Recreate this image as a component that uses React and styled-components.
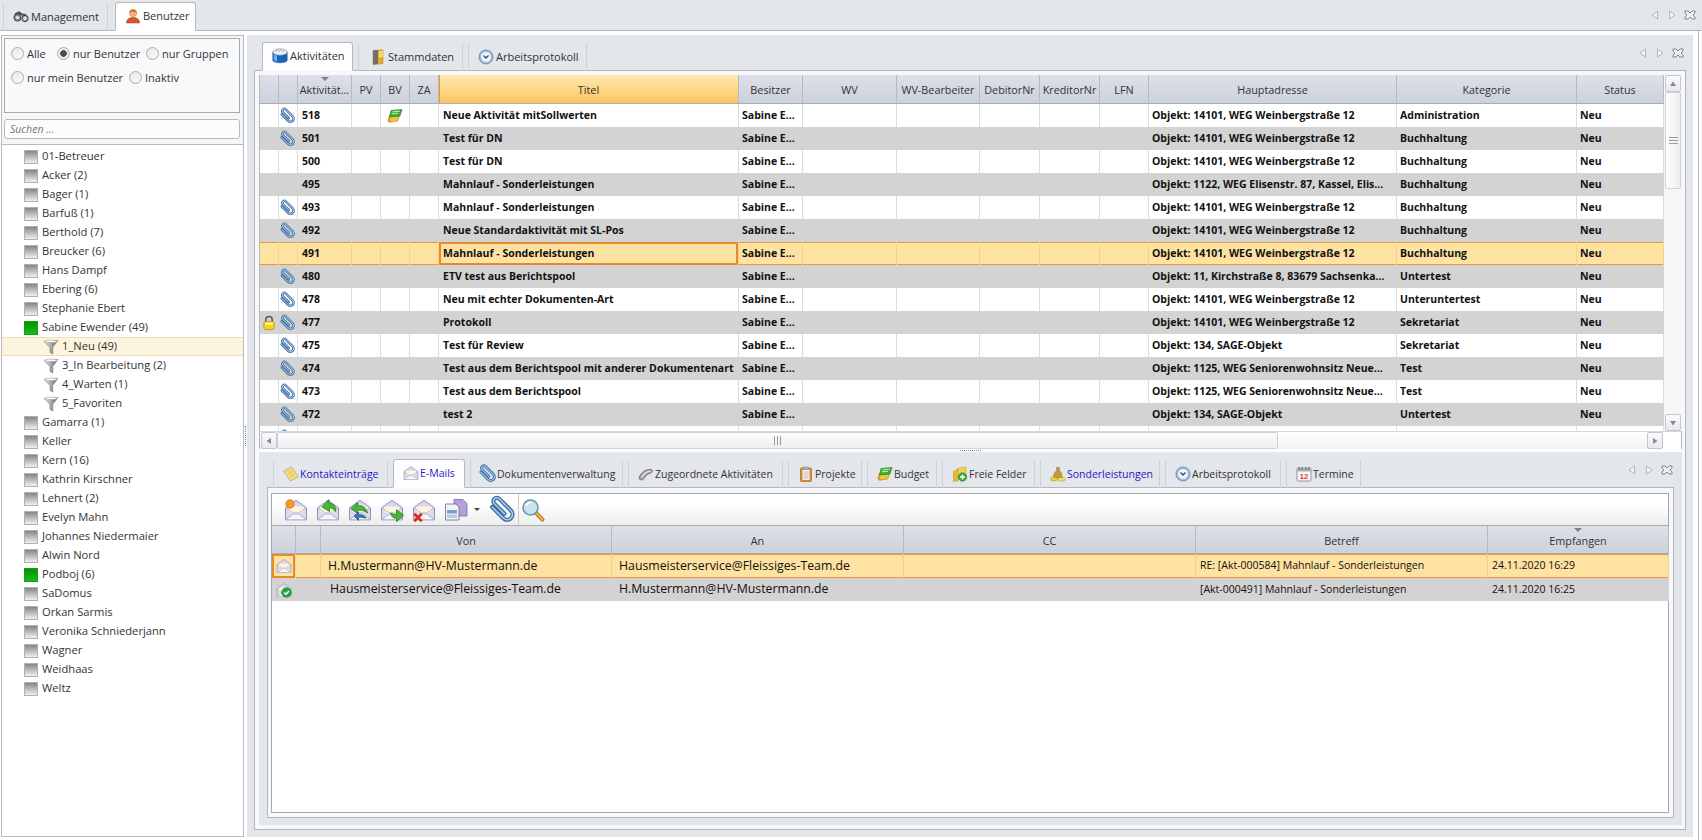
import React from "react";
import styled, { createGlobalStyle } from "styled-components";

const GlobalStyle = createGlobalStyle`
    html, body {
        margin: 0;
        padding: 0;
        background: #fff;
    }
    * {
        box-sizing: border-box;
    }
    body {
        font-family: "Open Sans", "Liberation Sans", sans-serif;
        font-size: 11px;
        color: #222;
    }
`;

const Page = styled.div`
    width: 1702px;
    height: 840px;
    overflow: hidden;
    display: flex;
    flex-direction: column;
    background: #fff;
`;

const TopStrip = styled.div`
    height: 31px;
    flex: none;
    display: flex;
    align-items: flex-end;
    padding-left: 3px;
    gap: 7px;
    background: #e3e6ea;
    border-bottom: 1px solid #b4b6b9;
`;

const Tab = styled.div`
    position: relative;
    width: ${p => p.$w}px;
    height: ${p => (p.$active ? 29 : 28)}px;
    margin-bottom: -1px;
    flex: none;
    display: flex;
    align-items: center;
    gap: ${p => p.$gap ?? 2}px;
    padding: 0 0 2px ${p => p.$pad ?? 9}px;
    white-space: nowrap;
    font-size: ${p => p.$size ?? 11}px;
    color: ${p => (p.$link ? "#1c1cc4" : "#333")};
    z-index: 1;
    background: ${p => (p.$active ? "linear-gradient(#fdfdfe, #fff)" : "transparent")};
    border: 1px solid ${p => (p.$active ? "#b7babd" : "#cdd0d5")};
    border-bottom: ${p => (p.$active ? "1px solid #fff" : "none")};
    border-radius: ${p => (p.$active ? "3px 3px 0 0" : "0")};
    border-top-color: ${p => (p.$active ? "#b7babd" : "transparent")};
`;

const Controls = styled.div`
    margin-left: auto;
    align-self: center;
    display: flex;
    align-items: center;
    gap: 7px;
    padding-right: ${p => p.$right}px;
`;

const Main = styled.div`
    flex: 1;
    min-height: 0;
    width: 1699px;
    display: flex;
    padding: 4px 5px 3px 1px;
    border-right: 1px solid #b4b6b9;
`;

const LeftPane = styled.div`
    width: 243px;
    flex: none;
    display: flex;
    flex-direction: column;
`;

const FilterArea = styled.div`
    height: 109px;
    flex: none;
    padding: 2px 3px 0 2px;
    background: #f5f6f8;
    border: 1px solid #b8babd;
    border-bottom: none;
`;

const RadioBox = styled.div`
    height: 75px;
    padding: 5px 0 0 6px;
    display: flex;
    flex-direction: column;
    gap: 6px;
    background: #f8f9fa;
    border: 1px solid #a8aaad;
`;

const RadioRow = styled.div`
    height: 18px;
    display: flex;
    align-items: center;
`;

const Radio = styled.label`
    display: flex;
    align-items: center;
    gap: 3px;
    width: ${p => p.$w}px;
    flex: none;
    font-size: 11px;
    color: #333;
`;

const RadioMark = styled.span`
    width: 13px;
    height: 13px;
    flex: none;
    border-radius: 50%;
    border: 1px solid #a9abae;
    background: ${p => (p.$on
        ? "radial-gradient(circle, #4a4a4a 0 3px, #e9ebee 3.6px)"
        : "linear-gradient(135deg, #e4e6e9, #fbfbfc)")};
`;

const SearchBox = styled.div`
    height: 20px;
    margin-top: 6px;
    padding-left: 5px;
    display: flex;
    align-items: center;
    font-style: italic;
    font-size: 10.5px;
    color: #777;
    background: #fcfcfd;
    border: 1px solid #b7b9bc;
    border-radius: 3px;
`;

const Tree = styled.div`
    flex: 1;
    padding-top: 2px;
    background: #fff;
    border: 1px solid #b8babd;
`;

const TreeRow = styled.div`
    height: 19px;
    display: flex;
    align-items: center;
    gap: ${p => (p.$sub ? 3 : 4)}px;
    padding-left: ${p => (p.$sub ? 41 : 22)}px;
    font-size: 11.2px;
    color: #333;
    background: ${p => (p.$selected ? "#fdf4de" : "transparent")};
    box-shadow: ${p => (p.$selected ? "inset 0 1px #ecdcbd, inset 0 -1px #ecdcbd" : "none")};
`;

const TreeLabel = styled.span`
    margin-top: -2px;
`;

const StateBox = styled.span`
    width: 14px;
    height: 14px;
    flex: none;
    border: 1px solid ${p => (p.$green ? "#10a010" : "#b0b0b0")};
    background: ${p => (p.$green
        ? "linear-gradient(#0a8f0a, #12c012)"
        : "linear-gradient(#858585, #f0f0f0)")};
`;

const VSplit = styled.div`
    width: 3px;
    flex: none;
    display: flex;
    align-items: center;
    justify-content: center;
`;

const VGrip = styled.div`
    width: 1px;
    height: 20px;
    border-left: 1px dotted #5f9a8a;
`;

const RightPane = styled.div`
    flex: 1;
    min-width: 0;
    display: flex;
    flex-direction: column;
    padding: 0 7px 7px;
    background: #e3e6ea;
`;

const TabStrip = styled.div`
    height: 35px;
    flex: none;
    display: flex;
    align-items: flex-end;
    gap: 5px;
    padding-left: ${p => p.$left}px;
`;

const TabBox = styled.div`
    flex: 1;
    min-height: 0;
    display: flex;
    flex-direction: column;
    padding: ${p => p.$pad};
    background: #f7f8f9;
    border: 1px solid #b4b6b9;
`;

const GridFrame = styled.div`
    height: 374px;
    flex: none;
    display: flex;
    flex-direction: column;
    background: #fff;
    border: 1px solid #b4b6b9;
    border-top: none;
`;

const GridTop = styled.div`
    height: 356px;
    flex: none;
    display: flex;
`;

const GridBody = styled.div`
    width: 1404px;
    flex: none;
    overflow: hidden;
`;

const Line = styled.div`
    display: grid;
    grid-template-columns: ${p => p.$cols};
    height: ${p => p.$h}px;
`;

const HeadCell = styled.div`
    position: relative;
    display: flex;
    align-items: center;
    justify-content: center;
    padding-top: 1px;
    font-size: 10.8px;
    color: #333;
    white-space: nowrap;
    overflow: hidden;
    background: ${p => (p.$hot
        ? "linear-gradient(#feeab0, #fbc661)"
        : "linear-gradient(#dde0e9, #cdd1dc)")};
    border-right: 1px solid #b6b9c1;
    border-bottom: 1px solid #a9acb2;
    box-shadow: ${p => (p.$hot ? "inset 1px 0 #e59a3a" : "none")};
`;

const SortMark = styled.span`
    position: absolute;
    top: 2px;
    left: 50%;
    margin-left: -4px;
    width: 0;
    height: 0;
    border-left: 4px solid transparent;
    border-right: 4px solid transparent;
    border-top: 4px solid #7d808a;
`;

const Cell = styled.div`
    display: flex;
    align-items: center;
    justify-content: ${p => (p.$icon ? "center" : "flex-start")};
    padding-left: ${p => (p.$icon ? 0 : p.$pad ?? 3)}px;
    padding-bottom: ${p => (p.$icon ? 0 : 2)}px;
    white-space: nowrap;
    overflow: hidden;
    font-size: ${p => p.$size ?? 10.5}px;
    font-weight: ${p => (p.$bold ? 700 : 400)};
    color: #111;
    background: ${p => (p.$selected ? "#fee2a1" : p.$odd ? "#d3d3d3" : "#fff")};
    border-right: 1px solid ${p => (p.$selected ? "#f2d491" : p.$odd ? "#d3d3d3" : "#dcdcdc")};
    box-shadow: ${p => {
        if (p.$focus) return "inset 0 0 0 2px #e58a2e";
        if (p.$selected) return "inset 0 1px #e8973d, inset 0 -1px #e8973d";
        return "none";
    }};
`;

const VScroll = styled.div`
    flex: 1;
    display: flex;
    flex-direction: column;
    padding: 0 1px;
    background: #f6f6f7;
`;

const HScroll = styled.div`
    flex: 1;
    display: flex;
    padding-left: 1px;
    background: linear-gradient(#fff, #f1f2f4);
    border-top: 1px solid #d4d6d9;
`;

const ScrollBtn = styled.div`
    width: 16px;
    height: 17px;
    flex: none;
    display: flex;
    align-items: center;
    justify-content: center;
    background: linear-gradient(#fafbfc, #e6e8eb);
    border: 1px solid #c3c6ca;
    border-radius: 2px;
`;

const VThumb = styled.div`
    height: 97px;
    flex: none;
    display: flex;
    align-items: center;
    justify-content: center;
    background: linear-gradient(90deg, #fdfdfe, #eceef1);
    border: 1px solid #cfd1d5;
    border-radius: 2px;
`;

const HThumb = styled.div`
    width: 1001px;
    flex: none;
    display: flex;
    align-items: center;
    justify-content: center;
    background: linear-gradient(#fdfdfe, #eceef1);
    border: 1px solid #cfd1d5;
    border-radius: 2px;
`;

const Spacer = styled.div`
    flex: 1;
`;

const ScrollCorner = styled.div`
    width: 18px;
    flex: none;
    background: #fff;
`;

const GripH = styled.div`
    width: 9px;
    height: 7px;
    border-top: 1px solid #9a9a9a;
    border-bottom: 1px solid #9a9a9a;
    background: linear-gradient(#9a9a9a, #9a9a9a) center / 100% 1px no-repeat;
`;

const GripV = styled.div`
    width: 7px;
    height: 9px;
    border-left: 1px solid #9a9a9a;
    border-right: 1px solid #9a9a9a;
    background: linear-gradient(#9a9a9a, #9a9a9a) center / 1px 100% no-repeat;
`;

const HSplit = styled.div`
    height: 3px;
    flex: none;
    display: flex;
    justify-content: center;
    background: #fff;
`;

const HGrip = styled.div`
    width: 21px;
    height: 1px;
    margin-top: 1px;
    border-top: 1px dotted #5f9a8a;
`;

const LowerPanel = styled.div`
    flex: 1;
    min-height: 0;
    display: flex;
    flex-direction: column;
    padding: 0 8px 7px;
    background: #e3e6ea;
`;

const MailBox = styled.div`
    flex: 1;
    min-height: 0;
    display: flex;
    flex-direction: column;
    background: #fff;
    border: 1px solid #a6a8ab;
`;

const Toolbar = styled.div`
    height: 32px;
    flex: none;
    display: flex;
    align-items: center;
    padding-left: 12px;
    background: linear-gradient(#fff 30%, #eceded);
    border-bottom: 1px solid #a9acb2;
`;

const ToolGroup = styled.div`
    display: flex;
    align-items: center;
    height: 100%;
    gap: 8px;
    padding-right: ${p => p.$end ?? 0}px;
    padding-left: ${p => p.$start ?? 0}px;
    border-right: ${p => (p.$line ? "1px solid #c9cbce" : "none")};
`;

const Caret = styled.span`
    width: 0;
    height: 0;
    margin-left: -2px;
    margin-right: 3px;
    border-left: 3px solid transparent;
    border-right: 3px solid transparent;
    border-top: 3px solid #444;
`;

/* icons */

const Svg = ({ size = 16, box = 16, children }) => (
    <svg width={size} height={size} viewBox={`0 0 ${box} ${box}`} style={{ flex: "none", display: "block", overflow: "visible" }}>
        {children}
    </svg>
);

const CLIP_PATH = "M4.300 1.500V12a3.600 3.600 0 0 0 7.200 0V1a2.300 2.300 0 0 0-4.600 0V10.500";

const Clip = ({ size = 14 }) => (
    <Svg size={size}>
        <g transform="rotate(-45 8 8)" fill="none" strokeLinecap="round">
            <path d={CLIP_PATH} stroke="#3a6c9f" strokeWidth="2.800" />
            <path d={CLIP_PATH} stroke="#a9c8e6" strokeWidth="1.100" />
        </g>
    </Svg>
);

const Funnel = () => (
    <Svg>
        <defs>
            <linearGradient id="fnl" x1="0" x2="1">
                <stop offset="0" stopColor="#f2f2f2" />
                <stop offset="1" stopColor="#5f5f5f" />
            </linearGradient>
        </defs>
        <path d="M1 2.500 15 1.500 9.800 8.200V15L7 13.500V8.400Z" fill="url(#fnl)" stroke="#777" strokeWidth=".6" />
        <ellipse cx="8" cy="2.300" rx="6.600" ry="1.200" fill="#fff" stroke="#8c8c8c" strokeWidth=".5" />
    </Svg>
);

const Lock = () => (
    <Svg>
        <path d="M4.800 7V4.600a3.200 3.200 0 0 1 6.400 0V7" fill="none" stroke="#555" strokeWidth="1.500" />
        <rect x="2.800" y="6.600" width="10.400" height="8" rx="2" fill="#f6d417" stroke="#b78d10" strokeWidth=".8" />
        <rect x="4" y="7.600" width="8" height="2.400" rx="1" fill="#fff18a" />
    </Svg>
);

const Budget = () => (
    <Svg>
        <path d="M2.500 7 6 8 3.500 14.500 .8 13Z" fill="#e7b632" stroke="#a67c16" strokeWidth=".5" />
        <path d="M3 8.500 12.500 8 10.500 13 2 14Z" fill="#f0c43c" stroke="#a67c16" strokeWidth=".6" />
        <path d="M4 2.500 15 1.500 13 8 2.500 8.800Z" fill="#3fae3a" stroke="#23781f" strokeWidth=".6" />
        <path d="M5.500 3.800 13 3.200M4.800 5.800 11 5.300" stroke="#c3efb0" strokeWidth="1" />
    </Svg>
);

const Binoculars = () => (
    <Svg>
        <circle cx="4.500" cy="8.500" r="3.600" fill="#8a8f96" stroke="#3f4348" />
        <circle cx="12" cy="9.500" r="3.200" fill="#a3a8ae" stroke="#3f4348" />
        <path d="M2 5.500 6 3.500 9 5.500 13 6" fill="none" stroke="#4a4e54" strokeWidth="2" />
        <circle cx="4.500" cy="8.500" r="1.600" fill="#e8ebee" />
        <circle cx="12" cy="9.500" r="1.400" fill="#e8ebee" />
    </Svg>
);

const UserIcon = () => (
    <Svg>
        <path d="M1.500 15c0-4 2.600-5.600 6.500-5.600s6.500 1.600 6.500 5.600Z" fill="#d9552a" stroke="#a53b17" strokeWidth=".5" />
        <circle cx="8" cy="5" r="3.700" fill="#f3b27f" stroke="#bd7a44" strokeWidth=".5" />
        <path d="M4.400 4.500C5 1.500 11 1.200 11.600 4.500 9.500 3.300 6.500 3.300 4.400 4.500Z" fill="#9c5a22" />
    </Svg>
);

const Drum = () => (
    <Svg>
        <path d="M.8 4V12.500C2 15.500 14 15.500 15.200 12.500V4Z" fill="#1666b8" stroke="#124a86" strokeWidth=".5" />
        <path d="M1.800 6.500V12c1 1.200 2.500 1.500 3.200 1.600V7.500Z" fill="#6cb0ec" />
        <ellipse cx="8" cy="4" rx="7.200" ry="3.200" fill="#eaeff4" stroke="#7d8a98" strokeWidth=".6" />
        <path d="M3.500 3 5.500 1.800 7 3.500 9 1.800 10.500 3.500 12.500 2.400" fill="none" stroke="#97a3b0" strokeWidth=".8" />
    </Svg>
);

const Binder = () => (
    <Svg>
        <path d="M3 1.500 13 .8V14.500L3 15.500Z" fill="#e5a92e" stroke="#a67c16" strokeWidth=".5" />
        <path d="M3 1.500 8 1V15L3 15.500Z" fill="#70706b" />
        <path d="M9 2 13 1.800V8L9 8.400Z" fill="#f6d676" />
    </Svg>
);

const ClockIcon = () => (
    <Svg>
        <circle cx="8" cy="8" r="7" fill="#9fc0e2" stroke="#5d7fa6" strokeWidth=".8" />
        <circle cx="8" cy="8" r="4.800" fill="#f3f7fb" />
        <path d="M5.500 6.500 8 9 10.500 6.500" fill="none" stroke="#27466e" strokeWidth="1.300" />
    </Svg>
);

const Note = () => (
    <Svg>
        <path d="M.8 5 8.500 1 15.500 10.500 7.500 15Z" fill="#f9e07f" stroke="#a8a16a" strokeWidth=".7" />
        <path d="M4 5.800 8.600 3.500M5.200 7.600 9.800 5.300M6.400 9.400 11 7.100M7.600 11.200 12.200 8.900" stroke="#bfa94a" strokeWidth=".6" />
    </Svg>
);

const Envelope = ({ size = 16, children }) => (
    <Svg size={size}>
        <path d="M1 6.500 8 1.500 15 6.500V14.500H1Z" fill="#dcd9ef" stroke="#8c8aa6" strokeWidth=".6" />
        <path d="M3 5.800H13V9L8 11.500 3 9Z" fill="#fdf6df" />
        <path d="M1 14.500 8 9.500 15 14.500Z" fill="#f6f6fc" stroke="#a9a7c0" strokeWidth=".5" />
        <path d="M1 6.800 8 11 15 6.800" fill="none" stroke="#a9a7c0" strokeWidth=".5" />
        {children}
    </Svg>
);

const Handshake = () => (
    <Svg>
        <path d="M1 12C3 6 8 3 13 3.500 15 4 15 6 13 7 9 8 7 10.500 5.500 13 4 14.500 1 14 1 12Z" fill="#a6a6a6" stroke="#5a5a5a" strokeWidth=".7" />
        <path d="M4 11.500C5.500 8 9 5.500 12.500 5.300" fill="none" stroke="#eee" strokeWidth="1.100" />
    </Svg>
);

const Clipboard = () => (
    <Svg>
        <rect x="2.500" y="2" width="11" height="13.500" rx="1" fill="#d68a37" stroke="#9c5e1b" strokeWidth=".6" />
        <rect x="4.500" y="3.500" width="7" height="10.500" fill="#f3f1ea" />
        <rect x="5.500" y="1" width="5" height="2.500" fill="#b3b3b3" stroke="#666" strokeWidth=".4" />
        <path d="M5.500 6H10.500M5.500 8H10.500M5.500 10H10.500M5.500 12H10.500" stroke="#aab" strokeWidth=".7" />
    </Svg>
);

const Folders = () => (
    <Svg>
        <path d="M5 3 9 1.500 14 1V11L5 13Z" fill="#f3cf58" stroke="#b89223" strokeWidth=".5" />
        <path d="M1.500 5.500 6 3.800V15L1.500 15.500Z" fill="#eab930" stroke="#b89223" strokeWidth=".5" />
        <circle cx="10.500" cy="11" r="4.200" fill="#3aa73a" stroke="#1f7a1f" strokeWidth=".5" />
        <path d="M10.500 8.500V13.500M8 11H13" stroke="#fff" strokeWidth="1.600" />
    </Svg>
);

const MoneyBag = () => (
    <Svg>
        <path d="M6.500 1.500H9.500L9 4.500C12 6 12.500 11 11.500 12H4C3 10.500 4 6 7 4.500Z" fill="#c79a3a" stroke="#7f5d18" strokeWidth=".5" />
        <ellipse cx="4" cy="13" rx="3.400" ry="2" fill="#f0cd3f" stroke="#a38315" strokeWidth=".5" />
        <ellipse cx="11.500" cy="13.300" rx="3.600" ry="2" fill="#f6de5f" stroke="#a38315" strokeWidth=".5" />
    </Svg>
);

const Calendar = () => (
    <Svg>
        <rect x="1" y="2" width="14" height="13" rx="1" fill="#f7f7f9" stroke="#7d7f85" strokeWidth=".8" />
        <rect x="1.500" y="2.500" width="13" height="3" fill="#a7adb7" />
        <path d="M3 1V4M6 1V4M10 1V4M13 1V4" stroke="#555" strokeWidth=".8" />
        <text x="8" y="13" textAnchor="middle" fontSize="7.500" fontWeight="700" fill="#d9382a" fontFamily="Liberation Sans, sans-serif">12</text>
    </Svg>
);

const MailSent = () => (
    <Envelope>
        <circle cx="10.500" cy="10.500" r="4.800" fill="#25a446" stroke="#14702c" strokeWidth=".5" />
        <path d="M8.200 10.500 10 12.300 13 9" fill="none" stroke="#fff" strokeWidth="1.400" />
    </Envelope>
);

const Arrow = ({ d, fill = "#47b53c", stroke = "#217a1c" }) => (
    <path d={d} fill={fill} stroke={stroke} strokeWidth=".5" />
);

const CopyDocs = () => (
    <Svg size={24} box={24}>
        <path d="M10 1.500H19L23 5.500V18H10Z" fill="#b69fdb" stroke="#6e5d90" strokeWidth=".7" />
        <path d="M1.500 6H12L15 9V22H1.500Z" fill="#f0f3f8" stroke="#5d6d84" strokeWidth=".8" />
        <rect x="3" y="12" width="10" height="3.500" fill="#7fa1c9" />
        <rect x="3" y="16.500" width="10" height="3.500" fill="#b6cbe2" />
    </Svg>
);

const Magnifier = () => (
    <Svg size={24} box={24}>
        <path d="M14 14 21.500 21.500" stroke="#b57a2c" strokeWidth="4" strokeLinecap="round" />
        <path d="M14.500 14.500 21.500 21.500" stroke="#f0b152" strokeWidth="1.800" strokeLinecap="round" />
        <circle cx="9.500" cy="9.500" r="7.500" fill="#c9e2f0" stroke="#6c8ea8" strokeWidth="1.500" />
        <path d="M5 8C6 5.500 8 4.500 10.500 4.500" fill="none" stroke="#fff" strokeWidth="1.600" />
    </Svg>
);

const Triangle = ({ dir }) => {
    const paths = {
        up: "M1 6 4 1.500 7 6Z",
        down: "M1 2 4 6.500 7 2Z",
        left: "M6 1 1.500 4 6 7Z",
        right: "M2 1 6.500 4 2 7Z"
    };
    return (
        <svg width="8" height="8" viewBox="0 0 8 8">
            <path d={paths[dir]} fill="#85888c" />
        </svg>
    );
};

const NavControls = ({ right }) => (
    <Controls $right={right}>
        <svg width="10" height="10" viewBox="0 0 10 10">
            <path d="M7.500 1 2 5 7.500 9Z" fill="#f4f5f6" stroke="#b3b6ba" />
        </svg>
        <svg width="10" height="10" viewBox="0 0 10 10">
            <path d="M2.500 1 8 5 2.500 9Z" fill="#f4f5f6" stroke="#b3b6ba" />
        </svg>
        <svg width="12" height="10" viewBox="0 0 12 10">
            <path d="M1 1H4L6 3 8 1H11V3L9 5 11 7V9H8L6 7 4 9H1V7L3 5 1 3Z" fill="#eef0f2" stroke="#777a7e" strokeWidth=".9" />
        </svg>
    </Controls>
);

/* data */

const ACT_COLS = "19px 19px 54px 29px 29px 29px 300px 64px 94px 83px 60px 60px 49px 248px 180px 87px";
const MAIL_COLS = "24px 25px 291px 292px 292px 292px 181px";

const ACT_HEADERS = [
    "", "", "Aktivität...", "PV", "BV", "ZA", "Titel", "Besitzer", "WV", "WV-Bearbeiter",
    "DebitorNr", "KreditorNr", "LFN", "Hauptadresse", "Kategorie", "Status"
];

const WEINBERG = "Objekt: 14101, WEG Weinbergstraße 12";
const SENIOR = "Objekt: 1125, WEG Seniorenwohnsitz Neue...";
const SAGE = "Objekt: 134, SAGE-Objekt";

const ACTIVITIES = [
    { id: 518, clip: true, budget: true, title: "Neue Aktivität mitSollwerten", address: WEINBERG, category: "Administration" },
    { id: 501, clip: true, title: "Test für DN", address: WEINBERG, category: "Buchhaltung" },
    { id: 500, title: "Test für DN", address: WEINBERG, category: "Buchhaltung" },
    { id: 495, title: "Mahnlauf - Sonderleistungen", address: "Objekt: 1122, WEG Elisenstr. 87, Kassel, Elis...", category: "Buchhaltung" },
    { id: 493, clip: true, title: "Mahnlauf - Sonderleistungen", address: WEINBERG, category: "Buchhaltung" },
    { id: 492, clip: true, title: "Neue Standardaktivität mit SL-Pos", address: WEINBERG, category: "Buchhaltung" },
    { id: 491, selected: true, title: "Mahnlauf - Sonderleistungen", address: WEINBERG, category: "Buchhaltung" },
    { id: 480, clip: true, title: "ETV test aus Berichtspool", address: "Objekt: 11, Kirchstraße 8, 83679 Sachsenka...", category: "Untertest" },
    { id: 478, clip: true, title: "Neu mit echter Dokumenten-Art", address: WEINBERG, category: "Unteruntertest" },
    { id: 477, clip: true, lock: true, title: "Protokoll", address: WEINBERG, category: "Sekretariat" },
    { id: 475, clip: true, title: "Test für Review", address: SAGE, category: "Sekretariat" },
    { id: 474, clip: true, title: "Test aus dem Berichtspool mit anderer Dokumentenart", address: SENIOR, category: "Test" },
    { id: 473, clip: true, title: "Test aus dem Berichtspool", address: SENIOR, category: "Test" },
    { id: 472, clip: true, title: "test 2", address: SAGE, category: "Untertest" }
];

const TREE = [
    { name: "01-Betreuer" }, { name: "Acker (2)" }, { name: "Bager (1)" }, { name: "Barfuß (1)" },
    { name: "Berthold (7)" }, { name: "Breucker (6)" }, { name: "Hans Dampf" }, { name: "Ebering (6)" },
    { name: "Stephanie Ebert" }, { name: "Sabine Ewender (49)", green: true },
    { name: "1_Neu (49)", sub: true, selected: true }, { name: "3_In Bearbeitung (2)", sub: true },
    { name: "4_Warten (1)", sub: true }, { name: "5_Favoriten", sub: true },
    { name: "Gamarra (1)" }, { name: "Keller" }, { name: "Kern (16)" }, { name: "Kathrin Kirschner" },
    { name: "Lehnert (2)" }, { name: "Evelyn Mahn" }, { name: "Johannes Niedermaier" }, { name: "Alwin Nord" },
    { name: "Podboj (6)", green: true }, { name: "SaDomus" }, { name: "Orkan Sarmis" },
    { name: "Veronika Schniederjann" }, { name: "Wagner" }, { name: "Weidhaas" }, { name: "Weltz" }
];

const LOWER_TABS = [
    { label: "Kontakteinträge", w: 115, icon: <Note />, link: true },
    { label: "E-Mails", w: 72, icon: <Envelope />, link: true, active: true },
    { label: "Dokumentenverwaltung", w: 153, icon: <Clip size={16} /> },
    { label: "Zugeordnete Aktivitäten", w: 155, icon: <Handshake /> },
    { label: "Projekte", w: 74, icon: <Clipboard /> },
    { label: "Budget", w: 70, icon: <Budget /> },
    { label: "Freie Felder", w: 93, icon: <Folders /> },
    { label: "Sonderleistungen", w: 120, icon: <MoneyBag />, link: true },
    { label: "Arbeitsprotokoll", w: 116, icon: <ClockIcon /> },
    { label: "Termine", w: 75, icon: <Calendar /> }
];

const ActivityRow = ({ row, odd }) => {
    const base = { $odd: odd, $selected: row.selected };
    const blank = n => Array.from({ length: n }, (_, i) => <Cell key={i} {...base} />);
    return (
        <Line $cols={ACT_COLS} $h={23}>
            <Cell {...base} $icon>{row.lock && <Lock />}</Cell>
            <Cell {...base} $icon>{row.clip && <Clip />}</Cell>
            <Cell {...base} $bold $pad={4}>{row.id}</Cell>
            <Cell {...base} />
            <Cell {...base} $icon>{row.budget && <Budget />}</Cell>
            <Cell {...base} />
            <Cell {...base} $bold $pad={4} $focus={row.selected}>{row.title}</Cell>
            <Cell {...base} $bold>{row.id && "Sabine E..."}</Cell>
            {blank(5)}
            <Cell {...base} $bold>{row.address}</Cell>
            <Cell {...base} $bold>{row.category}</Cell>
            <Cell {...base} $bold>{row.id && "Neu"}</Cell>
        </Line>
    );
};

const App = () => (
    <Page>
        <GlobalStyle />
        <TopStrip>
            <Tab $w={105} $pad={9}><Binoculars />Management</Tab>
            <Tab $w={81} $active $pad={9}><UserIcon />Benutzer</Tab>
            <NavControls right={6} />
        </TopStrip>
        <Main>
            <LeftPane>
                <FilterArea>
                    <RadioBox>
                        <RadioRow>
                            <Radio $w={46}><RadioMark />Alle</Radio>
                            <Radio $w={89}><RadioMark $on />nur Benutzer</Radio>
                            <Radio $w={90}><RadioMark />nur Gruppen</Radio>
                        </RadioRow>
                        <RadioRow>
                            <Radio $w={118}><RadioMark />nur mein Benutzer</Radio>
                            <Radio $w={60}><RadioMark />Inaktiv</Radio>
                        </RadioRow>
                    </RadioBox>
                    <SearchBox>Suchen ...</SearchBox>
                </FilterArea>
                <Tree>
                    {TREE.map(item => (
                        <TreeRow key={item.name} $sub={item.sub} $selected={item.selected}>
                            {item.sub ? <Funnel /> : <StateBox $green={item.green} />}
                            <TreeLabel>{item.name}</TreeLabel>
                        </TreeRow>
                    ))}
                </Tree>
            </LeftPane>
            <VSplit><VGrip /></VSplit>
            <RightPane>
                <TabStrip $left={8}>
                    <Tab $w={91} $active><Drum />Aktivitäten</Tab>
                    <Tab $w={105} $pad={11}><Binder />Stammdaten</Tab>
                    <Tab $w={119}><ClockIcon />Arbeitsprotokoll</Tab>
                    <NavControls right={2} />
                </TabStrip>
                <TabBox $pad="4px 3px 4px 4px">
                    <GridFrame>
                        <GridTop>
                            <GridBody>
                                <Line $cols={ACT_COLS} $h={29}>
                                    {ACT_HEADERS.map((label, i) => (
                                        <HeadCell key={i} $hot={label === "Titel"}>
                                            {i === 2 && <SortMark />}
                                            {label}
                                        </HeadCell>
                                    ))}
                                </Line>
                                {ACTIVITIES.map((row, i) => (
                                    <ActivityRow key={row.id} row={row} odd={i % 2 === 1} />
                                ))}
                                <ActivityRow row={{ clip: true }} odd={false} />
                            </GridBody>
                            <VScroll>
                                <ScrollBtn><Triangle dir="up" /></ScrollBtn>
                                <VThumb><GripH /></VThumb>
                                <Spacer />
                                <ScrollBtn><Triangle dir="down" /></ScrollBtn>
                            </VScroll>
                        </GridTop>
                        <HScroll>
                            <ScrollBtn><Triangle dir="left" /></ScrollBtn>
                            <HThumb><GripV /></HThumb>
                            <Spacer />
                            <ScrollBtn><Triangle dir="right" /></ScrollBtn>
                            <ScrollCorner />
                        </HScroll>
                    </GridFrame>
                    <HSplit><HGrip /></HSplit>
                    <LowerPanel>
                        <TabStrip $left={6}>
                            {LOWER_TABS.map(tab => (
                                <Tab key={tab.label} $w={tab.w} $active={tab.active} $link={tab.link} $gap={1} $size={10.5}>
                                    {tab.icon}{tab.label}
                                </Tab>
                            ))}
                            <NavControls right={1} />
                        </TabStrip>
                        <TabBox $pad="5px 4px 4px 3px">
                            <MailBox>
                                <Toolbar>
                                    <ToolGroup $line $end={3}>
                                        <Envelope size={24}>
                                            <circle cx="4" cy="4" r="2.800" fill="#f29a2e" stroke="#d8641a" strokeWidth=".5" />
                                        </Envelope>
                                        <Envelope size={24}>
                                            <Arrow d="M4 6 8.500 1 9 3.500C12 3.500 13.500 6 13 9 11.500 7 10 6.500 9 6.500L9 9Z" />
                                        </Envelope>
                                        <Envelope size={24}>
                                            <Arrow d="M2 7 6.500 3V5C10 5 12.500 7 13 10 11 8.500 9 8 6.500 8V10.500Z" />
                                            <Arrow d="M4 12 7 9.500V11C9 11 11 11.500 12 13.500 10 12.800 9 12.800 7 12.800V15Z" fill="#3a78c8" stroke="#1d4f94" />
                                        </Envelope>
                                        <Envelope size={24}>
                                            <Arrow d="M15.800 11.500 11 15.800V13.500C9 13.500 7.500 12.500 7 10 8.500 11 10 11 11 11V7.800Z" />
                                        </Envelope>
                                        <Envelope size={24}>
                                            <path d="M1.500 10.500 6.500 15.500M6.500 10.500 1.500 15.500" stroke="#d62d20" strokeWidth="1.800" />
                                        </Envelope>
                                        <CopyDocs />
                                        <Caret />
                                        <Clip size={24} />
                                    </ToolGroup>
                                    <ToolGroup $start={2}>
                                        <Magnifier />
                                    </ToolGroup>
                                </Toolbar>
                                <Line $cols={MAIL_COLS} $h={28}>
                                    <HeadCell />
                                    <HeadCell />
                                    <HeadCell>Von</HeadCell>
                                    <HeadCell>An</HeadCell>
                                    <HeadCell>CC</HeadCell>
                                    <HeadCell>Betreff</HeadCell>
                                    <HeadCell><SortMark />Empfangen</HeadCell>
                                </Line>
                                <Line $cols={MAIL_COLS} $h={24}>
                                    <Cell $icon $selected $focus><Envelope /></Cell>
                                    <Cell $selected />
                                    <Cell $selected $size={12.3} $pad={7}>H.Mustermann@HV-Mustermann.de</Cell>
                                    <Cell $selected $size={12.3} $pad={7}>Hausmeisterservice@Fleissiges-Team.de</Cell>
                                    <Cell $selected />
                                    <Cell $selected $pad={4}>RE: [Akt-000584] Mahnlauf - Sonderleistungen</Cell>
                                    <Cell $selected $pad={4}>24.11.2020 16:29</Cell>
                                </Line>
                                <Line $cols={MAIL_COLS} $h={23}>
                                    <Cell $icon $odd><MailSent /></Cell>
                                    <Cell $odd />
                                    <Cell $odd $size={12.3} $pad={9}>Hausmeisterservice@Fleissiges-Team.de</Cell>
                                    <Cell $odd $size={12.3} $pad={7}>H.Mustermann@HV-Mustermann.de</Cell>
                                    <Cell $odd />
                                    <Cell $odd $pad={4}>[Akt-000491] Mahnlauf - Sonderleistungen</Cell>
                                    <Cell $odd $pad={4}>24.11.2020 16:25</Cell>
                                </Line>
                            </MailBox>
                        </TabBox>
                    </LowerPanel>
                </TabBox>
            </RightPane>
        </Main>
    </Page>
);

export default App;
